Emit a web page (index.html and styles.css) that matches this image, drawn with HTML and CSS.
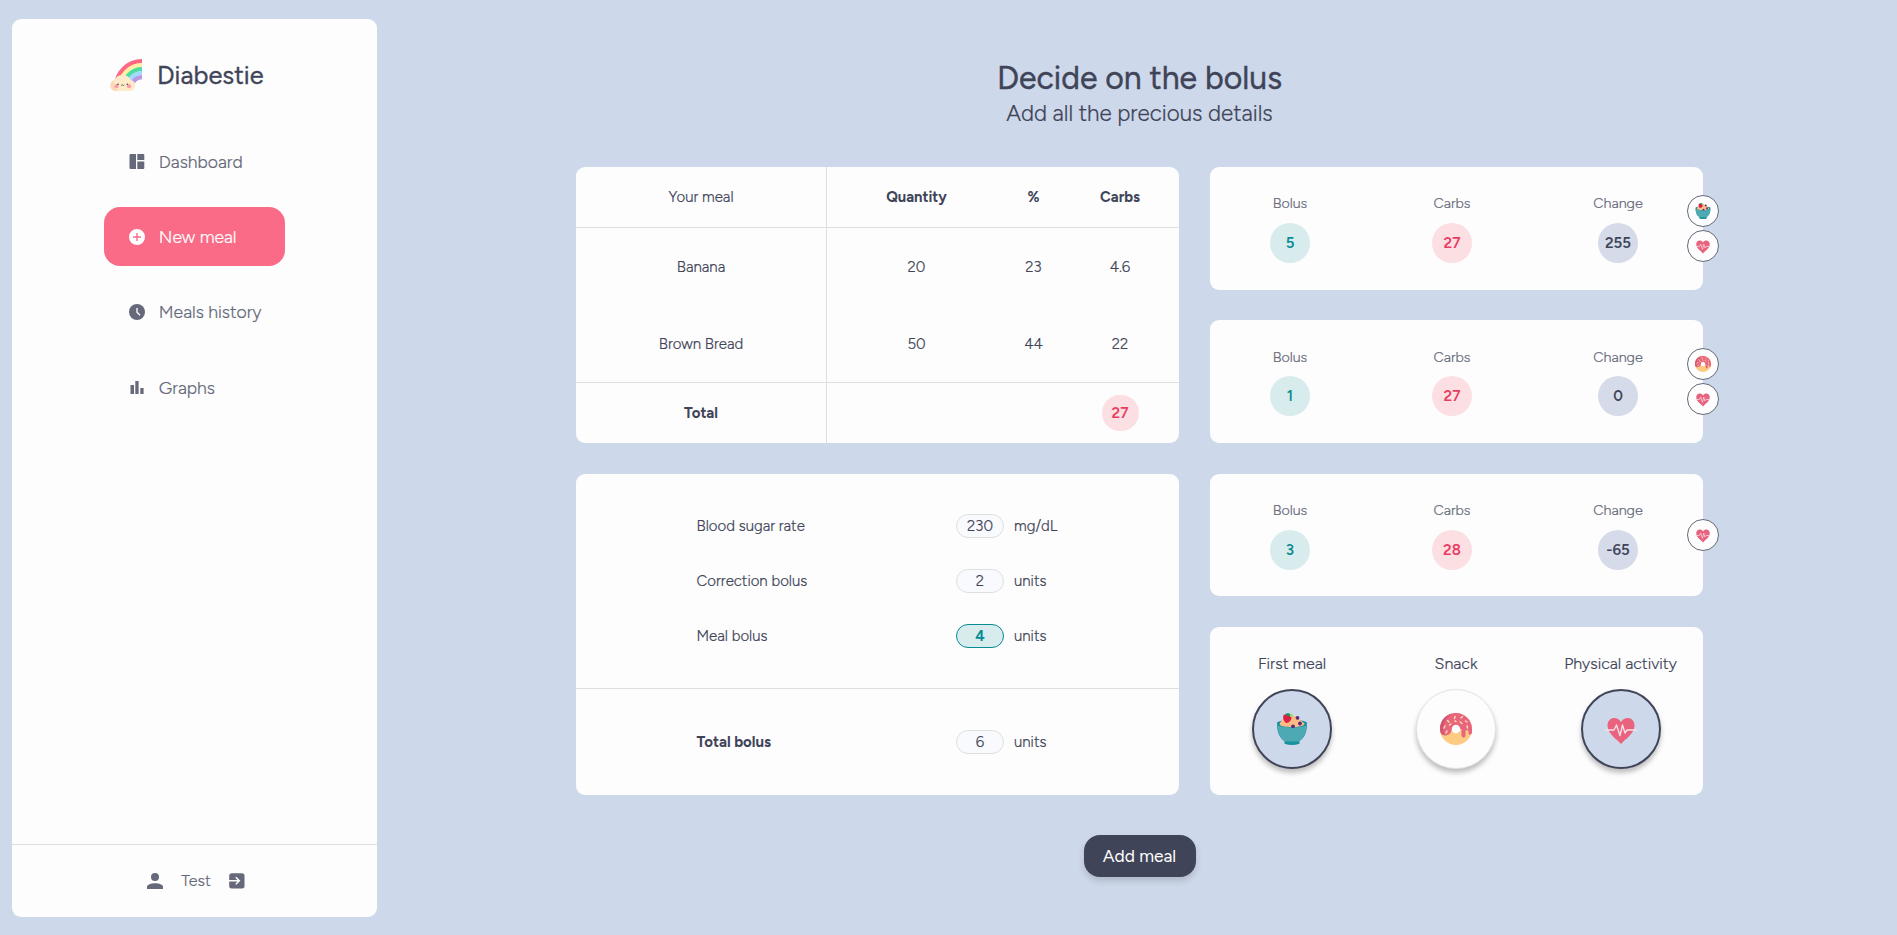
FILE: index.html
```html
<!DOCTYPE html>
<html lang="en">
<head>
<meta charset="utf-8">
<title>Diabestie</title>
<link rel="stylesheet" href="styles.css">
</head>
<body>
<svg class="defs" width="0" height="0" aria-hidden="true">
  <symbol id="bowl" viewBox="0 0 32 32">
    <path d="M1.200 9.500h29.600c.8 9-2.500 15.500-7.300 18.500v2.800q-7.500 2.400-15 0V28C3.700 25 .4 18.500 1.200 9.500z" fill="#18919e"/>
    <ellipse cx="16" cy="9.800" rx="14.800" ry="3" fill="#18919e"/>
    <path d="M3.500 11C6 6 9 4 13 3c4-1 8 0 10 3l5.500 4.500c1 4.500-24 5-25 .5z" fill="#fdbb87"/>
    <path d="M1.500 12.500c7 2.500 22 2.500 29 0 0 8-3.500 13.500-8 16H9.500C5 26 1.500 20.500 1.500 12.500z" fill="#4daab4"/>
    <path d="M7.500 2c4-1.500 8 1 8 3.500-1 3-3.500 4.500-5.500 4.500C7.500 8 6.500 5 7.500 2z" fill="#dc1f45"/>
    <path d="M9 1l3-1 3 1.500-2.500 2z" fill="#12956f"/><path d="M14 3.500l1-3.500 2 3 0 1.500z" fill="#9be052"/>
    <g fill="#5d2b73"><circle cx="21.500" cy="4.800" r="1.900"/><circle cx="24" cy="10.500" r="1.900"/><circle cx="17" cy="13.300" r="1.900"/></g>
  </symbol>
  <symbol id="donut" viewBox="0 0 32 32">
    <circle cx="16" cy="16" r="10.200" fill="none" stroke="#fecb83" stroke-width="11.600"/>
    <path fill-rule="evenodd" d="M0 16a16 16 0 0 1 32 0v4q-1.500 3-3.500 1v-3q-1.500-2-3 0v5q-2 3.500-4 0v-7h-1.200a4.300 4.300 0 1 0-8.600 0C11.500 23.500 2 24 .8 20z" fill="#e8657e"/>
    <path d="M0 16C0 8 5 2 12 .5 6 4 2 12 4 22 1 21 0 19 0 16z" fill="#d45673"/>
    <path d="M5 13l-1 2M7.500 7.500l1.500 1.500M15 3.500l-.5 2M21 5l1.500-1.500M20 9l2 1.500M25.500 8l1.500 1M7 18l-1 2M27 13l.5 2M11 11l-1.500 1M15 8l1 .5" stroke="#ffe1ad" stroke-width="1.400" stroke-linecap="round"/>
  </symbol>
  <symbol id="heart" viewBox="0 0 32 32">
    <path d="M16 31C13 27 2.500 21 2.500 12.500 2.500 4.500 12 2.500 16 9c4-6.500 13.500-4.500 13.500 3.500C29.500 21 19 27 16 31z" fill="#e9637e"/>
    <path d="M0 17h9l2.500-5 3.500 10.500L17.500 12l2.500 8 2-3h10" fill="none" stroke="#f6dfe6" stroke-width="1.400" stroke-linejoin="round"/>
  </symbol>
</svg>
<div class="app">
  <aside class="sidebar">
    <div class="brand">
      <svg class="brand-logo" viewBox="0 0 32 32">
        <g fill="none" stroke-width="4.200">
          <path d="M6 28A26 26 0 0 1 32 2.100" stroke="#ff6784"/>
          <path d="M10 28A22 22 0 0 1 32 6.100" stroke="#fff0a3"/>
          <path d="M14 28A18 18 0 0 1 32 10.100" stroke="#4fdca1"/>
          <path d="M18 28A14 14 0 0 1 32 14.100" stroke="#a2dafb"/>
          <path d="M22 26A10 10 0 0 1 32 18.100" stroke="#b797e3"/>
        </g>
        <path d="M5.500 32a5.500 5.500 0 0 1-1-10.800A9 9 0 0 1 20.800 21a5.600 5.600 0 0 1-.5 11z" fill="#fdebc9"/>
        <path d="M5.500 32a5.500 5.500 0 0 1-1-10.800C3 26 5 30 9 32z" fill="#fbd9b5"/>
        <circle cx="6.500" cy="27.200" r="2.100" fill="#ff9bac"/><circle cx="19" cy="27.200" r="2.100" fill="#ff9bac"/>
        <circle cx="8" cy="25.300" r=".8" fill="#444"/><circle cx="17.300" cy="25.300" r=".8" fill="#444"/>
        <path d="M11 25.800q.9 1.500 1.700 0 .9 1.500 1.700 0" fill="none" stroke="#444" stroke-width=".8"/>
      </svg>
      <span class="brand-name">Diabestie</span>
    </div>
    <nav class="nav">
      <a class="nav-item"><svg class="icon" viewBox="0 0 16 16"><path d="M1.500 0H7v15H1.500Q.5 15 .5 14V1q0-1 1-1zM8.300 0h6q1 0 1 1v5h-7zM8.300 7.500h7V14q0 1-1 1h-6z"/></svg><span>Dashboard</span></a>
      <a class="nav-item active"><svg class="icon" viewBox="0 0 16 16"><path fill-rule="evenodd" d="M8 0a8 8 0 1 1 0 16A8 8 0 0 1 8 0zM7.300 4v3.300H4v1.400h3.300V12h1.400V8.700H12V7.300H8.700V4z"/></svg><span>New meal</span></a>
      <a class="nav-item"><svg class="icon" viewBox="0 0 16 16"><circle cx="8" cy="8" r="8"/><path d="M8 4v4.200l3 3" fill="none" stroke="#fdfdfd" stroke-width="1.400"/></svg><span>Meals history</span></a>
      <a class="nav-item"><svg class="icon" viewBox="0 0 16 16"><path d="M1.500 5H5v9H1.500zM6.300 1h3.300v13H6.300zM11.300 8h3.300v6h-3.300z"/></svg><span>Graphs</span></a>
    </nav>
    <div class="user">
      <svg class="icon" viewBox="0 0 16 16"><circle cx="8" cy="4" r="4"/><path d="M0 16v-2c0-5 16-5 16 0v2z"/></svg>
      <span>Test</span>
      <svg class="icon" viewBox="0 0 16 16"><rect x=".2" y=".2" width="15.300" height="15.300" rx="2.500"/><path d="M0 7.800h10M6.800 4.300l3.500 3.500-3.500 3.500" fill="none" stroke="#fdfdfd" stroke-width="1.500"/></svg>
    </div>
  </aside>
  <main class="main">
    <header class="heading">
      <h1 class="title">Decide on the bolus</h1>
      <p class="subtitle">Add all the precious details</p>
    </header>
    <div class="board">
      <div class="column">
        <section class="card meal">
          <div class="meal-row head"><span class="name">Your meal</span><b>Quantity</b><b>%</b><b>Carbs</b></div>
          <div class="meal-row"><span class="name">Banana</span><span>20</span><span>23</span><span>4.6</span></div>
          <div class="meal-row"><span class="name">Brown Bread</span><span>50</span><span>44</span><span>22</span></div>
          <div class="meal-row foot"><b class="name">Total</b><span></span><span></span><span><i class="pill pink small">27</i></span></div>
        </section>
        <section class="card calc">
          <div class="calc-rows">
            <div class="calc-row"><span>Blood sugar rate</span><span class="field">230</span><span>mg/dL</span></div>
            <div class="calc-row"><span>Correction bolus</span><span class="field">2</span><span>units</span></div>
            <div class="calc-row"><span>Meal bolus</span><span class="field on">4</span><span>units</span></div>
          </div>
          <div class="calc-total">
            <div class="calc-row"><b>Total bolus</b><span class="field">6</span><span>units</span></div>
          </div>
        </section>
      </div>
      <div class="column">
        <section class="card past">
          <div class="stat"><span>Bolus</span><i class="pill teal">5</i></div>
          <div class="stat"><span>Carbs</span><i class="pill pink">27</i></div>
          <div class="stat"><span>Change</span><i class="pill grey">255</i></div>
          <div class="badges"><span class="badge"><svg><use href="#bowl"/></svg></span><span class="badge"><svg><use href="#heart"/></svg></span></div>
        </section>
        <section class="card past">
          <div class="stat"><span>Bolus</span><i class="pill teal">1</i></div>
          <div class="stat"><span>Carbs</span><i class="pill pink">27</i></div>
          <div class="stat"><span>Change</span><i class="pill grey">0</i></div>
          <div class="badges"><span class="badge"><svg><use href="#donut"/></svg></span><span class="badge"><svg><use href="#heart"/></svg></span></div>
        </section>
        <section class="card past">
          <div class="stat"><span>Bolus</span><i class="pill teal">3</i></div>
          <div class="stat"><span>Carbs</span><i class="pill pink">28</i></div>
          <div class="stat"><span>Change</span><i class="pill grey">-65</i></div>
          <div class="badges"><span class="badge"><svg><use href="#heart"/></svg></span></div>
        </section>
        <section class="card tags">
          <div class="tag"><span>First meal</span><span class="toggle on"><svg><use href="#bowl"/></svg></span></div>
          <div class="tag"><span>Snack</span><span class="toggle"><svg><use href="#donut"/></svg></span></div>
          <div class="tag"><span>Physical activity</span><span class="toggle on"><svg><use href="#heart"/></svg></span></div>
        </section>
      </div>
    </div>
    <button class="add">Add meal</button>
  </main>
</div>
</body>
</html>
```
FILE: styles.css
```css
* { box-sizing: border-box; }
body { margin: 0; background: #cdd8ea; color: #404458; font: 300 15px/20px Figtree, Lato, sans-serif; -webkit-text-stroke: .2px; }
h1, p { margin: 0; }
i { font-style: normal; }
b { font-weight: 700; -webkit-text-stroke: 0; }
.defs { position: absolute; }
.app { display: flex; height: 935px; overflow: hidden; }
.card, .sidebar { background: #fdfdfd; border-radius: 9px; }

.sidebar { width: 365px; height: 898px; margin: 19px 0 0 12px; display: flex; flex-direction: column; color: #656979; }
.brand { display: flex; align-items: center; gap: 15px; padding: 39px 0 0 98px; height: 73px; color: #404458; }
.brand-logo { width: 32px; height: 32px; }
.brand-name { font-size: 25.500px; line-height: 32px; font-weight: 400; -webkit-text-stroke: .3px; }
.nav { display: flex; flex-direction: column; gap: 16.300px; margin: 40px 0 0 92px; width: 181px; }
.nav-item { display: flex; align-items: center; gap: 13.500px; height: 59px; padding-left: 25.300px; border-radius: 16px; font-size: 17.600px; }
.nav-item:last-child { margin-top: .7px; }
.nav-item.active { background: #f96b86; color: #fff; }
.icon { width: 16px; height: 16px; fill: currentColor; flex: none; }
.user { margin-top: auto; height: 73px; border-top: 1px solid #dfdfe0; padding-left: 3px; display: flex; align-items: center; justify-content: center; gap: 18px; font-size: 16px; }

.main { flex: 1; display: flex; flex-direction: column; align-items: center; padding-left: 5px; }
.heading { text-align: center; padding-top: 58px; height: 167px; }
.title { font-size: 32px; line-height: 40px; font-weight: 400; -webkit-text-stroke: .4px; }
.subtitle { font-size: 22.400px; line-height: 31px; }
.board { display: flex; gap: 31px; height: 628px; }
.column { display: flex; flex-direction: column; justify-content: space-between; }

.meal { width: 603px; height: 276px; }
.meal-row { display: grid; grid-template-columns: 251px 179px 55px 118px; height: 77px; text-align: center; align-items: center; }
.meal-row.head { height: 61px; border-bottom: 1px solid #dfdfe0; }
.meal-row.foot { height: 61px; border-top: 1px solid #dfdfe0; }
.name { align-self: stretch; display: flex; align-items: center; justify-content: center; border-right: 1px solid #dfdfe0; }
.head b { font-size: 14.800px; }

.calc { width: 603px; height: 321px; }
.calc-rows { height: 215px; padding: 40px 0 0 120.500px; display: flex; flex-direction: column; gap: 31px; border-bottom: 1px solid #dfdfe0; }
.calc-total { padding: 41px 0 0 120.500px; }
.calc-row { display: grid; grid-template-columns: 259.500px 48px 1fr; align-items: center; height: 24px; }
.calc-row > :last-child { padding-left: 10px; }
.field { height: 24px; border: 1px solid #dfdfe0; border-radius: 12px; background: #f9fafd; text-align: center; line-height: 22px; }
.field.on { background: #d8ebed; border-color: #078c94; color: #078c94; font-weight: 700; -webkit-text-stroke: 0; }

.past { position: relative; width: 493px; height: 122.600px; padding-top: 26.200px; display: grid; grid-template-columns: 160px 164px 168px; }
.stat { display: flex; flex-direction: column; align-items: center; gap: 9.800px; color: #656979; font-size: 14.300px; }
.pill { display: inline-flex; align-items: center; justify-content: center; width: 40px; height: 40px; border-radius: 20px; font-size: 15px; font-weight: 600; -webkit-text-stroke: 0; }
.pill.small { width: 37px; height: 36px; }
.teal { background: #d8ebed; color: #078c94; }
.pink { background: #fbdfe3; color: #ea3b60; }
.grey { background: #d5dbe8; color: #404458; }
.badges { position: absolute; right: -16px; top: 0; bottom: 0; display: flex; flex-direction: column; justify-content: center; gap: 3px; }
.badge { width: 32px; height: 32px; border: 1px solid #656979; border-radius: 50%; background: #fdfdfd; display: flex; align-items: center; justify-content: center; }
.badge svg { width: 16px; height: 16px; }

.tags { width: 493px; height: 168px; padding-top: 27px; display: grid; grid-template-columns: 164px 164px 165px; }
.tag { display: flex; flex-direction: column; align-items: center; gap: 15px; white-space: nowrap; font-size: 16px; }
.toggle { width: 80px; height: 80px; border: 1px solid #e3e3e5; border-radius: 50%; background: #fdfdfd; box-shadow: 0 4px 5px rgba(0,0,0,.25); display: flex; align-items: center; justify-content: center; }
.toggle.on { border: 2px solid #404458; background: #cdd8ea; }
.toggle svg { width: 32px; height: 32px; }

.add { margin-top: 40px; width: 112px; height: 42px; border: 0; border-radius: 16px; background: #404458; color: #fff; font: 400 17.400px/24px Figtree, Lato, sans-serif; -webkit-text-stroke: 0; box-shadow: 0 4px 6px rgba(0,0,0,.15); }
```
